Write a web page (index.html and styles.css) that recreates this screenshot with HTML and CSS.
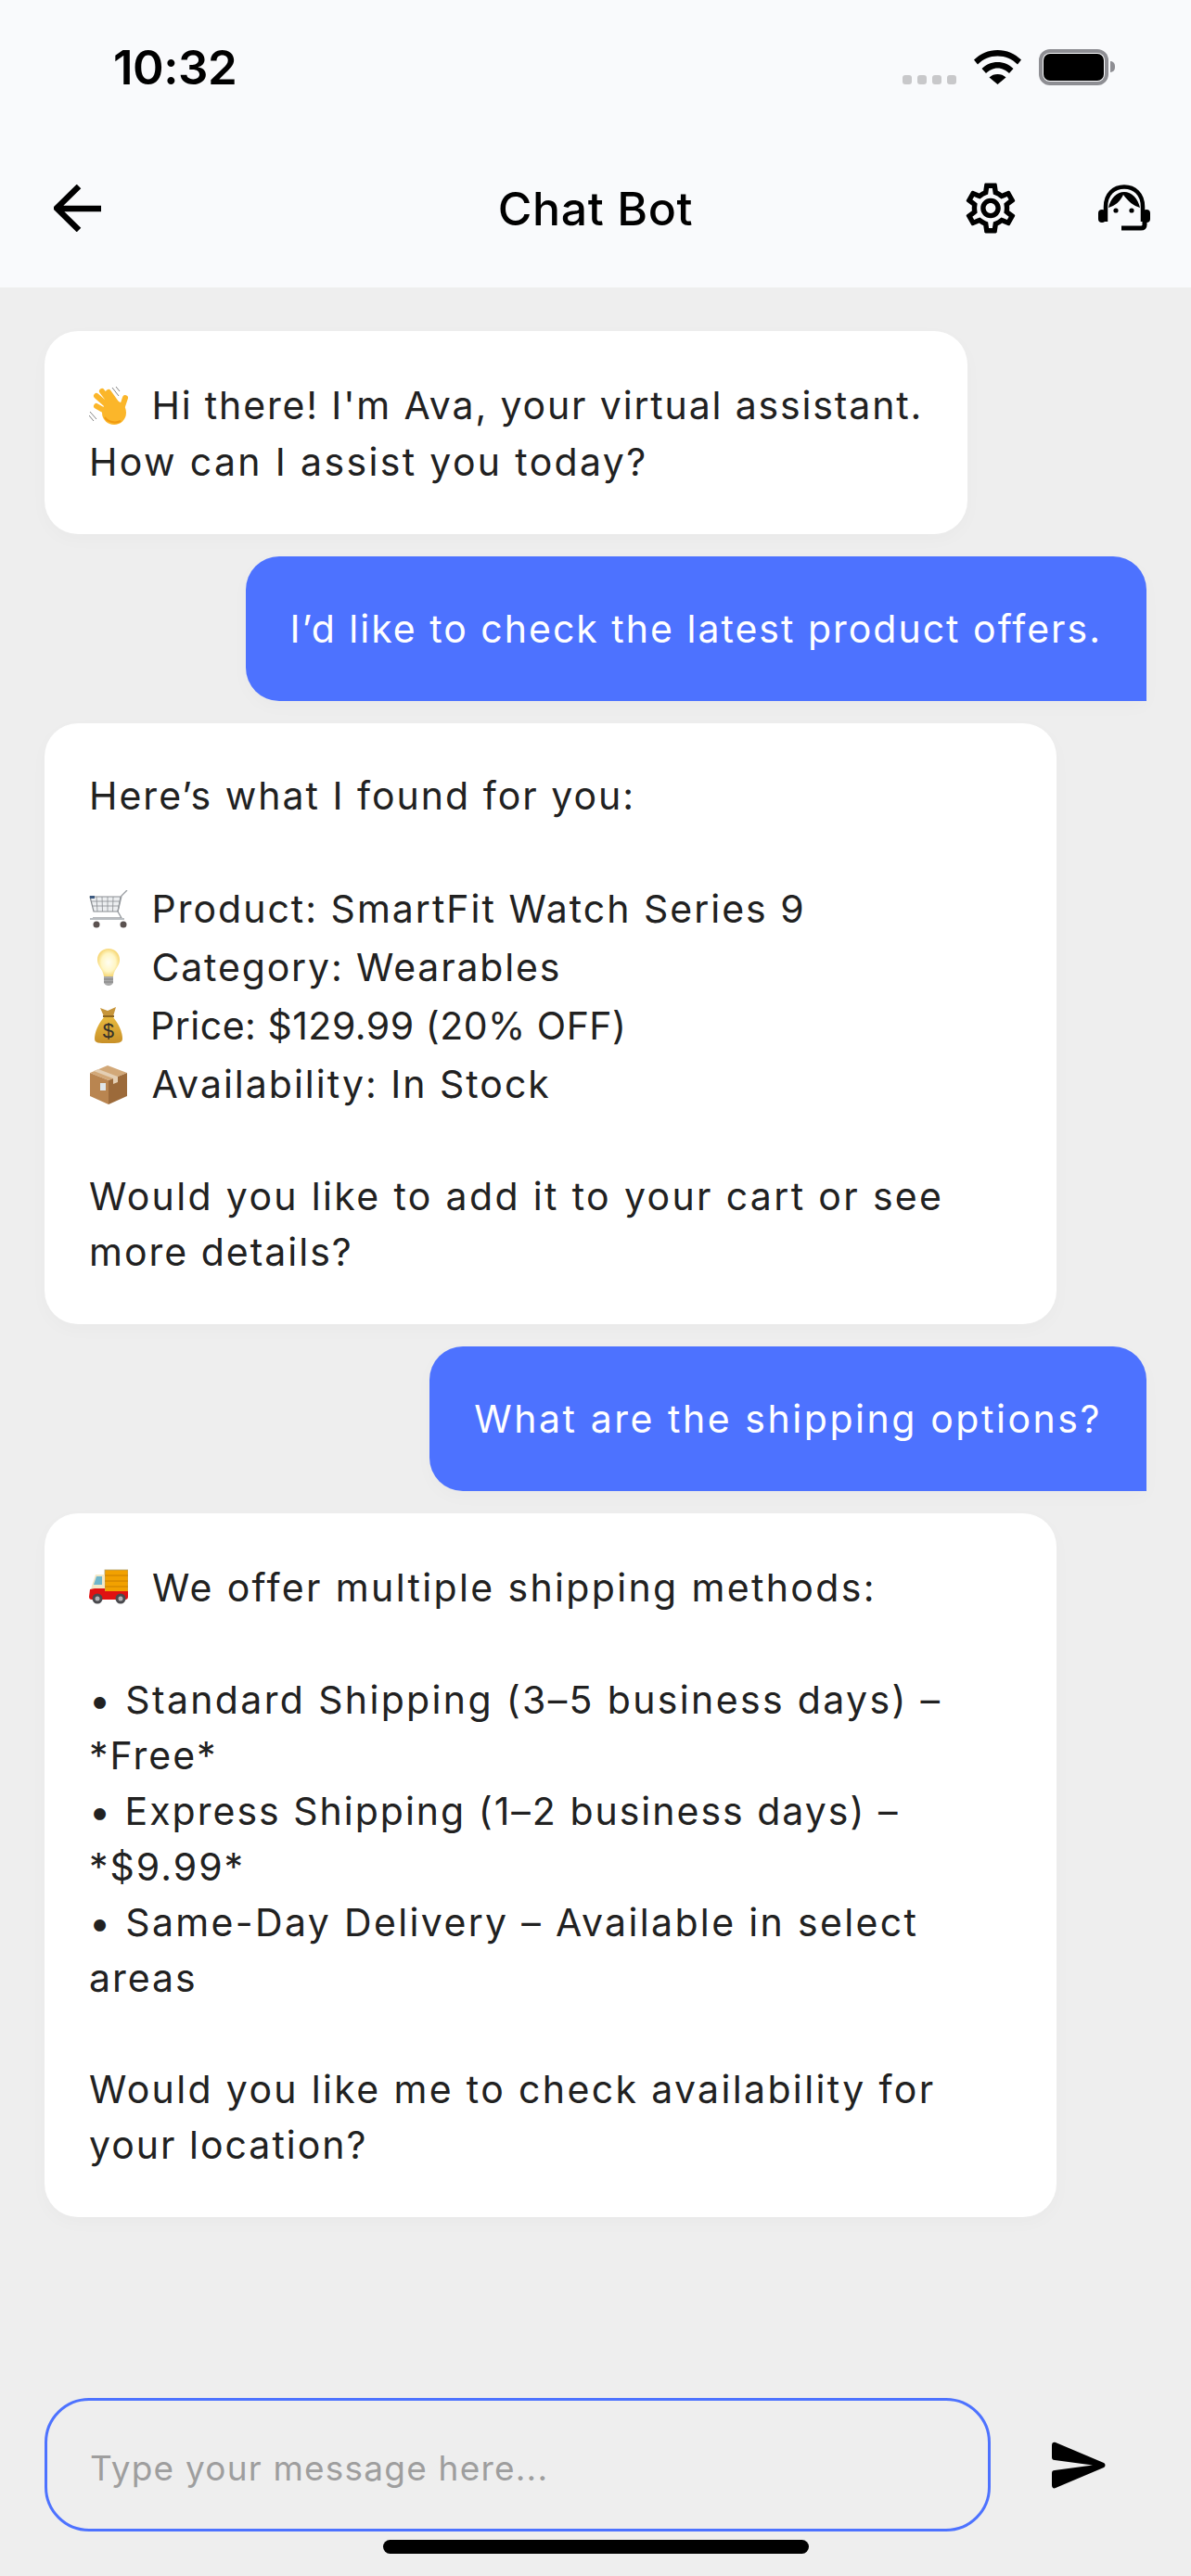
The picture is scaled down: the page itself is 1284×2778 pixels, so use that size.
FILE: index.html
```html
<!DOCTYPE html>
<html lang="en">
<head>
    <meta charset="UTF-8">
    <meta name="viewport" content="width=device-width, initial-scale=1.0">
    <title>Chat Bot</title>
    <link rel="stylesheet" href="styles.css">
</head>
<body>
    <div class="app">
        <header class="topbar">
            <div class="status-bar">
                <span class="time">10:32</span>
                <div class="status-icons">
                    <div class="signal"><i></i><i></i><i></i><i></i></div>
                    <svg class="wifi" viewBox="0 0 51 37">
                        <path d="M25.5 0C15.5 0 7 4 0 10.5L4 15.5C10 9.5 17 6.5 25.5 6.5C34 6.5 41 9.5 47 15.5L51 10.5C44 4 35.5 0 25.5 0Z"/>
                        <path d="M25.5 13C19 13 13 15.5 8.5 20L13 25C16 22 20.5 19.5 25.5 19.5C30.5 19.5 35 22 38 25L42.5 20C38 15.5 32 13 25.5 13Z"/>
                        <path d="M25.5 26C22 26 19 27 16.5 29.5L25.5 37L34.5 29.5C32 27 29 26 25.5 26Z"/>
                    </svg>
                    <div class="battery"><div class="battery-level"></div></div>
                    <div class="battery-nub"></div>
                </div>
            </div>
            <nav class="nav">
                <svg class="back-icon" viewBox="0 0 52 51">
                    <path d="M51 26H6M27 2L3 25.5L27 49" fill="none" stroke="#000" stroke-width="6.5"/>
                </svg>
                <h1 class="title">Chat Bot</h1>
                <div class="nav-actions">
                    <svg class="gear-icon" viewBox="2 2 20 20">
                        <path d="M19.43 12.98c.04-.32.07-.64.07-.98 0-.34-.03-.66-.07-.98l2.11-1.65c.19-.15.24-.42.12-.64l-2-3.46c-.09-.16-.26-.25-.44-.25-.06 0-.12.01-.17.03l-2.49 1c-.52-.4-1.08-.73-1.69-.98l-.38-2.65C14.46 2.18 14.25 2 14 2h-4c-.25 0-.46.18-.49.42l-.38 2.65c-.61.25-1.17.59-1.69.98l-2.49-1c-.06-.02-.12-.03-.18-.03-.17 0-.34.09-.43.25l-2 3.46c-.13.22-.07.49.12.64l2.11 1.65c-.04.32-.07.65-.07.98 0 .33.03.66.07.98l-2.11 1.65c-.19.15-.24.42-.12.64l2 3.46c.09.16.26.25.44.25.06 0 .12-.01.17-.03l2.49-1c.52.4 1.08.73 1.69.98l.38 2.65c.03.24.24.42.49.42h4c.25 0 .46-.18.49-.42l.38-2.65c.61-.25 1.17-.59 1.69-.98l2.49 1c.06.02.12.03.18.03.17 0 .34-.09.43-.25l2-3.46c.12-.22.07-.49-.12-.64l-2.11-1.65zm-1.98-1.71c.04.31.05.52.05.73 0 .21-.02.43-.05.73l-.14 1.13.89.7 1.08.84-.7 1.21-1.27-.51-1.04-.42-.9.68c-.43.32-.84.56-1.25.73l-1.06.43-.16 1.13-.2 1.35h-1.4l-.19-1.35-.16-1.13-1.06-.43c-.43-.18-.83-.41-1.23-.71l-.91-.7-1.06.43-1.27.51-.7-1.21 1.08-.84.89-.7-.14-1.13c-.03-.31-.05-.54-.05-.74s.02-.43.05-.73l.14-1.13-.89-.7-1.08-.84.7-1.21 1.27.51 1.04.42.9-.68c.43-.32.84-.56 1.25-.73l1.06-.43.16-1.13.2-1.35h1.39l.19 1.35.16 1.13 1.06.43c.43.18.83.41 1.23.71l.91.7 1.06-.43 1.27-.51.7 1.21-1.07.85-.89.7.14 1.13zM12 8c-2.21 0-4 1.79-4 4s1.79 4 4 4 4-1.79 4-4-1.79-4-4-4zm0 6c-1.1 0-2-.9-2-2s.9-2 2-2 2 .9 2 2-.9 2-2 2z"/>
                    </svg>
                    <svg class="agent-icon" viewBox="0 0 56 50">
                        <path d="M8 40V24C8 10 17 2.500 28 2.500C39 2.500 48 10 48 24V40" fill="none" stroke="#000" stroke-width="4.500"/>
                        <rect x="0" y="27" width="8" height="14" rx="4"/>
                        <rect x="48" y="27" width="8" height="14" rx="4"/>
                        <path d="M11 25C13 15 20 8 28 8C36 8 43 15 45 25C38 23 32 18 27 11C24 18 18 23 11 25Z"/>
                        <circle cx="19" cy="28" r="2.600"/>
                        <circle cx="36" cy="28" r="2.600"/>
                        <path d="M50 38V43.500Q50 47 46 47H25" fill="none" stroke="#000" stroke-width="5"/>
                    </svg>
                </div>
            </nav>
        </header>

        <main class="messages">
            <div class="bubble bot greeting">
                <div class="line-emoji narrow">
                    <svg class="emoji" viewBox="0 0 42 42">
                        <g stroke="#fbb62a" stroke-width="6" stroke-linecap="round" fill="none">
                            <path d="M24 30L8 21M24 24L8 10M27 22L14 5M31 20L21 6M35 24L39 12"/>
                        </g>
                        <circle cx="27" cy="28" r="13" fill="#fbb62a"/>
                        <path d="M17 33C20 38 28 40 34 37" stroke="#f09a10" stroke-width="2" fill="none"/>
                        <path d="M1 27L8 35M0 31L5 37M25 1L32 10M29 0L33 5" stroke="#777" stroke-width="0.900" fill="none"/>
                    </svg>
                    Hi there! I'm Ava, your virtual assistant.
                </div>
                <div class="wider">How can I assist you today?</div>
            </div>

            <div class="bubble user">I’d like to check the latest product offers.</div>

            <div class="bubble bot wide">
                <div>Here’s what I found for you:</div>
                <div class="blank"></div>
                <div class="line-emoji">
                    <svg class="emoji" viewBox="0 0 42 42">
                        <path d="M1 7H34L31 23H5Z" fill="#eceef0" stroke="#8a8e92" stroke-width="1.200"/>
                        <path d="M8 7L9 23M14 7L14.500 23M20 7V23M26 7L25.500 23M3 12H33M4 17H32" stroke="#8a8e92" stroke-width="0.800" fill="none"/>
                        <rect x="1" y="6" width="5" height="3" fill="#3d5a80"/>
                        <path d="M41 0L35 6L31 23L35 30H4" stroke="#9a9ea2" stroke-width="1.400" fill="none"/>
                        <path d="M1 31H38" stroke="#b8bcc0" stroke-width="2"/>
                        <circle cx="8" cy="37" r="3.500" fill="#5b5250"/>
                        <circle cx="37" cy="37" r="3.500" fill="#5b5250"/>
                    </svg>
                    Product: SmartFit Watch Series 9
                </div>
                <div class="line-emoji narrow">
                    <svg class="emoji" viewBox="0 0 42 42">
                        <defs>
                            <radialGradient id="bulbFill">
                                <stop offset="0" stop-color="#fffef2"/>
                                <stop offset="0.650" stop-color="#fff6c4"/>
                                <stop offset="1" stop-color="#f7d878"/>
                            </radialGradient>
                        </defs>
                        <path d="M21 0C14 0 9 5 9 12C9 19 15 22 16 30H26C27 22 33 19 33 12C33 5 28 0 21 0Z" fill="url(#bulbFill)"/>
                        <path d="M16 30H26V37C24 41 18 41 16 37Z" fill="#a9a9a9"/>
                        <path d="M16 33H26M16 36H26" stroke="#7c7c7c" stroke-width="0.900"/>
                    </svg>
                    Category: Wearables
                </div>
                <div class="line-emoji price">
                    <svg class="emoji" viewBox="0 0 42 42">
                        <defs>
                            <linearGradient id="bagFill" x1="0" y1="0" x2="0" y2="1">
                                <stop offset="0" stop-color="#e8b93e"/>
                                <stop offset="1" stop-color="#c89028"/>
                            </linearGradient>
                        </defs>
                        <path d="M12 1L20 4L29 0L26 10H16Z" fill="#c7953a"/>
                        <path d="M16 11H26C31 17 36 26 36 34C36 39 31 39 21 39C10 39 6 39 6 34C6 26 11 17 16 11Z" fill="url(#bagFill)"/>
                        <path d="M15 10H27" stroke="#8c6520" stroke-width="2"/>
                        <text x="21" y="33" class="bag-sign">$</text>
                    </svg>
                    Price: $129.99 (20% OFF)
                </div>
                <div class="line-emoji">
                    <svg class="emoji" viewBox="0 0 42 42">
                        <path d="M20 0L41 8L21 16L1 8Z" fill="#d2a878"/>
                        <path d="M1 8L21 16V42L1 33Z" fill="#b98550"/>
                        <path d="M41 8L21 16V42L41 33Z" fill="#9c6a3a"/>
                        <path d="M10 4L31 12V18L26 20V14L5 6Z" fill="#e4cfb4"/>
                        <rect x="12" y="19" width="6" height="8" fill="#dfe6ea"/>
                    </svg>
                    Availability: In Stock
                </div>
                <div class="blank"></div>
                <div class="wider">Would you like to add it to your cart or see</div>
                <div>more details?</div>
            </div>

            <div class="bubble user shipping">What are the shipping options?</div>

            <div class="bubble bot wide">
                <div class="line-emoji wider">
                    <svg class="emoji" viewBox="0 0 42 42">
                        <rect x="17" y="1" width="25" height="26" fill="#f2a100" stroke="#b0a070" stroke-width="0.800"/>
                        <path d="M17 7H42M17 13H42M17 19H42" stroke="#c97f00" stroke-width="1"/>
                        <path d="M3 18L7 6H17V24H2Z" fill="#f3e7c6"/>
                        <path d="M5 17L8 8H14V17Z" fill="#6fb6cc"/>
                        <path d="M1 22L6 21H17V24H42V30C42 32 41 33 39 33H3C1 33 0 32 0 30Z" fill="#e01212"/>
                        <circle cx="9" cy="32" r="5.500" fill="#4a4a4e"/>
                        <circle cx="9" cy="32" r="2.500" fill="#b4b4b8"/>
                        <circle cx="34" cy="32" r="5.500" fill="#4a4a4e"/>
                        <circle cx="34" cy="32" r="2.500" fill="#b4b4b8"/>
                    </svg>
                    We offer multiple shipping methods:
                </div>
                <div class="blank"></div>
                <div class="wider">• Standard Shipping (3–5 business days) –</div>
                <div>*Free*</div>
                <div>• Express Shipping (1–2 business days) –</div>
                <div>*$9.99*</div>
                <div class="wider">• Same-Day Delivery – Available in select</div>
                <div>areas</div>
                <div class="blank"></div>
                <div class="wider">Would you like me to check availability for</div>
                <div>your location?</div>
            </div>
        </main>

        <footer class="composer">
            <input class="message-input" type="text" placeholder="Type your message here...">
            <svg class="send-icon" viewBox="0 0 58 51">
                <path d="M0 4C0 1 2 0 4 1L56 23C58 24 58 27 56 28L4 50C2 51 0 50 0 47V34C0 32 1 31 3 31L44 25.500L3 20C1 20 0 19 0 17Z"/>
            </svg>
        </footer>
        <div class="home-bar"></div>
    </div>
</body>
</html>
```

FILE: styles.css
```css
* {
    box-sizing: border-box;
}
body {
    margin: 0;
    background-color: #eeeeee;
    font-family: Inter, "Open Sans", sans-serif;
    color: #212121;
}
.app {
    display: flex;
    flex-direction: column;
    height: 2778px;
}
.topbar {
    height: 310px;
    background-color: #f9fafc;
}
.status-bar {
    display: flex;
    justify-content: space-between;
    align-items: center;
    height: 146px;
    padding: 0 82px 2px 122px;
}
.time {
    font-size: 51px;
    font-weight: 600;
    letter-spacing: -0.5px;
    color: #000;
}
.status-icons {
    display: flex;
    align-items: center;
}
.signal {
    display: flex;
    gap: 6px;
    align-self: flex-end;
    margin-right: 19px;
    margin-bottom: 1px;
}
.signal i {
    width: 10px;
    height: 10px;
    border-radius: 3px;
    background-color: #c8c8ca;
}
.wifi {
    width: 51px;
    height: 37px;
    margin-right: 19px;
}
.battery {
    width: 75px;
    height: 39px;
    padding: 5px;
    border-radius: 12px;
    background-color: #8e8e93;
}
.battery-level {
    height: 100%;
    border-radius: 7px;
    background-color: #000;
    box-shadow: 0 0 0 1px #f9fafc;
}
.battery-nub {
    width: 5px;
    height: 12px;
    margin-left: 2px;
    border-radius: 0 6px 6px 0;
    background-color: #8e8e93;
}
.nav {
    display: grid;
    grid-template-columns: 1fr auto 1fr;
    align-items: center;
    height: 164px;
    padding: 0 44px;
    margin-top: -4px;
}
.back-icon {
    width: 52px;
    height: 51px;
    margin-left: 14px;
}
.title {
    margin: 0;
    padding-top: 2px;
    font-size: 50px;
    font-weight: 500;
    letter-spacing: 0.6px;
    color: #000;
}
.nav-actions {
    display: flex;
    align-items: center;
    justify-content: flex-end;
    gap: 89px;
}
.gear-icon {
    width: 54px;
    height: 55px;
}
.agent-icon {
    width: 56px;
    height: 50px;
}
.messages {
    flex: 1;
    display: flex;
    flex-direction: column;
    gap: 24px;
    padding: 47px 48px 0;
}
.bubble {
    width: fit-content;
    padding: 48px;
    font-size: 41px;
    line-height: 60px;
    letter-spacing: 2px;
    white-space: nowrap;
    box-shadow: 0 6px 20px rgba(0, 0, 0, 0.025);
}
.bot {
    align-self: flex-start;
    border-radius: 36px;
    background-color: #fff;
}
.wide {
    width: 1091px;
}
.greeting {
    width: 995px;
}
.user {
    align-self: flex-end;
    border-radius: 36px 36px 0 36px;
    background-color: #4d72ff;
    color: #fff;
}
.shipping {
    letter-spacing: 2.55px;
}
.wider {
    letter-spacing: 2.35px;
}
.narrow {
    letter-spacing: 1.85px;
}
.price {
    letter-spacing: 0.5px;
}
.line-emoji {
    padding-top: 2px;
    line-height: 61px;
}
.blank {
    height: 60px;
}
.emoji {
    display: inline-block;
    width: 42px;
    height: 42px;
    margin-right: 12px;
    vertical-align: -7px;
}
.bag-sign {
    font-family: "Liberation Sans", sans-serif;
    font-size: 22px;
    text-anchor: middle;
    fill: #33302a;
}
.composer {
    display: flex;
    align-items: center;
    gap: 66px;
    padding: 0 92px 0 48px;
}
.message-input {
    width: 1020px;
    height: 144px;
    padding: 6px 46px 0;
    border: 3px solid #4d72ff;
    border-radius: 48px;
    background: transparent;
    font-family: inherit;
    font-size: 37px;
    letter-spacing: 1.2px;
    outline: none;
}
.message-input::placeholder {
    color: #9e9e9e;
}
.send-icon {
    width: 58px;
    height: 51px;
}
.home-bar {
    align-self: center;
    width: 459px;
    height: 15px;
    margin: 9px 0 24px;
    border-radius: 8px;
    background-color: #000;
}
```
